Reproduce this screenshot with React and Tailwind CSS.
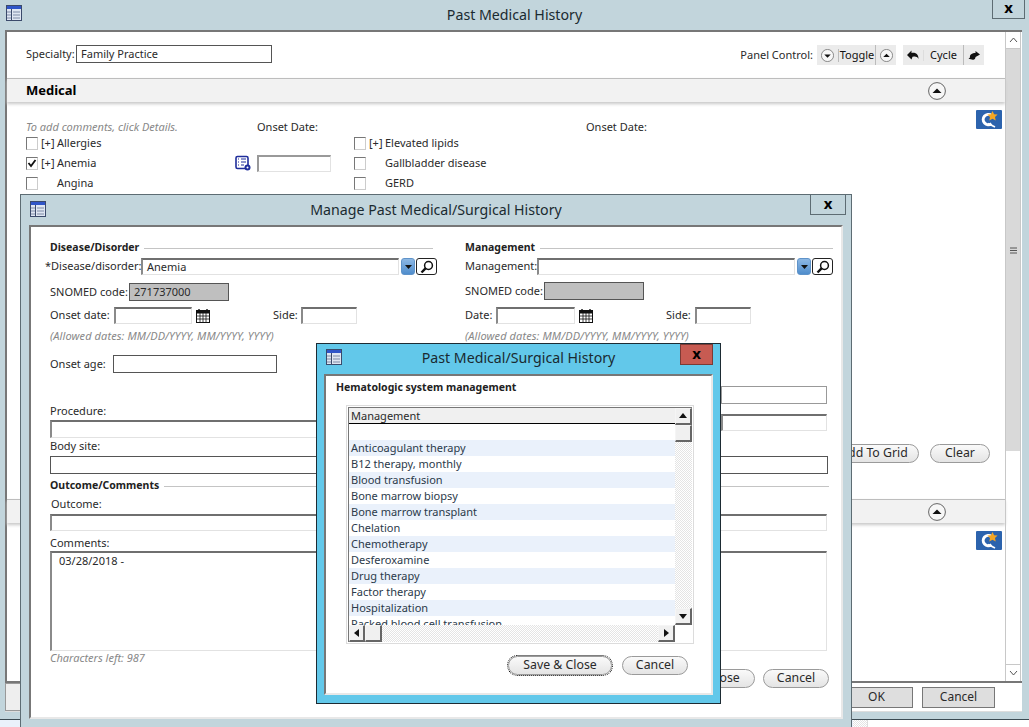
import React from 'react';

const TableIcon = () => (
  <svg width="16" height="16" viewBox="0 0 16 16" className="block">
    <rect x="0.5" y="0.5" width="15" height="15" fill="#dfe6f2" stroke="#3b4a6b" />
    <rect x="1" y="1" width="14" height="3" fill="#2f55c8" />
    <path d="M1 7h4M1 10h4M1 13h4M7 7h7M7 10h7M7 13h7" stroke="#7d8aa5" strokeWidth="1" />
    <path d="M5.5 4v11" stroke="#3b4a6b" />
  </svg>
);

const CircleArrow = ({ down, size = 18 }) => (
  <svg width={size} height={size} viewBox="0 0 18 18" className="block">
    <circle cx="9" cy="9" r="8.4" fill="#f7f7f7" stroke="#555" strokeWidth="0.9" />
    <path d={down ? 'M4.5 7.5h9L9 12z' : 'M4.5 11h9L9 6.5z'} fill="#111" />
  </svg>
);

const QIcon = () => (
  <svg width="26" height="19" viewBox="0 0 26 19" className="block">
    <rect width="26" height="19" rx="1" fill="#2c63ad" />
    <path d="M15.5 5.4a5.2 5.2 0 1 0 0 8.4" fill="none" stroke="#fff" strokeWidth="3" />
    <path d="M12 13.5l7 3.5" stroke="#fff" strokeWidth="1.6" />
    <path d="M16.5 1l1.6 3.2 3.5.4-2.6 2.4.7 3.5-3.2-1.8-3.2 1.8.7-3.5-2.6-2.4 3.5-.4z" fill="#f5a623" />
  </svg>
);

const CalendarIcon = () => (
  <svg width="14" height="14" viewBox="0 0 14 14" className="block">
    <rect x="0.5" y="1.5" width="13" height="12" fill="#fff" stroke="#111" />
    <rect x="1" y="2" width="12" height="2.5" fill="#111" />
    <path d="M3 0v3M11 0v3" stroke="#111" strokeWidth="1.4" />
    <path d="M4 4v9M7 4v9M10 4v9M1 7h12M1 10h12" stroke="#111" strokeWidth="0.8" />
  </svg>
);

const DropdownButton = () => (
  <div className="flex h-[17px] w-[14px] shrink-0 items-center justify-center rounded-[3px] border border-[#5f93c9] bg-gradient-to-b from-[#8db8e4] to-[#4f8dcc]">
    <svg width="7" height="4" viewBox="0 0 7 4"><path d="M0 0h7L3.5 4z" fill="#111" /></svg>
  </div>
);

const SearchButton = () => (
  <div className="flex h-[17px] w-[21px] shrink-0 items-center justify-center rounded-[3px] border border-[#222] bg-white">
    <svg width="14" height="14" viewBox="0 0 14 14">
      <circle cx="8.5" cy="5.5" r="3.9" fill="#fff" stroke="#111" strokeWidth="1.5" />
      <path d="M5.8 8.2L1.5 12.5" stroke="#111" strokeWidth="2.4" />
    </svg>
  </div>
);

const Sunken = ({ className = '', children }) => (
  <div className={`h-[17px] shrink-0 border-t-2 border-l-2 border-r border-b border-t-[#6f6f6f] border-l-[#8a8a8a] border-r-[#e2e2e2] border-b-[#e2e2e2] bg-white pl-1 leading-[13px] ${className}`}>
    {children}
  </div>
);

const Boxed = ({ className = '', bg = 'bg-white', children }) => (
  <div className={`h-[18px] shrink-0 border border-[#555] pl-1 leading-[16px] ${bg} ${className}`}>{children}</div>
);

const Pill = ({ className = '', children }) => (
  <div className={`flex h-[19px] items-center justify-center rounded-[10px] border border-[#9a9a9a] bg-gradient-to-b from-[#fafafa] to-[#e4e4e4] text-[12.3px] ${className}`}>
    {children}
  </div>
);

const Check = ({ checked }) => (
  <div className="flex h-[13px] w-[12px] items-center justify-center border-t border-l border-r border-b border-t-[#777] border-l-[#777] border-r-[#ccc] border-b-[#ccc] bg-white">
    {checked && (
      <svg width="10" height="10" viewBox="0 0 10 10"><path d="M1.5 5l2.5 3 4.5-6" fill="none" stroke="#111" strokeWidth="1.8" /></svg>
    )}
  </div>
);

const HistoryRow = ({ label, plus, checked }) => (
  <div className="flex h-[20px] items-center">
    <Check checked={checked} />
    <span className="ml-[3px] w-[16px] whitespace-nowrap">{plus ? '[+]' : ''}</span>
    <span>{label}</span>
  </div>
);

const SectionTitle = ({ children, className = '' }) => (
  <div className={`flex items-center ${className}`}>
    <span className="text-[10.5px] font-bold text-[#222]">{children}</span>
    <span className="ml-[5px] flex-1 border-t border-[#c4c4c4]" />
  </div>
);

const ArrowBtn = ({ d, className = '' }) => (
  <div className={`flex items-center justify-center border-t border-l border-r-2 border-b-2 border-t-[#f5f5f5] border-l-[#f5f5f5] border-r-[#666] border-b-[#666] bg-[#f0f0f0] ${className}`}>
    <svg width="8" height="8" viewBox="0 0 8 8"><path d={d} fill="#111" /></svg>
  </div>
);

const managementItems = [
  'Anticoagulant therapy',
  'B12 therapy, monthly',
  'Blood transfusion',
  'Bone marrow biopsy',
  'Bone marrow transplant',
  'Chelation',
  'Chemotherapy',
  'Desferoxamine',
  'Drug therapy',
  'Factor therapy',
  'Hospitalization',
  'Packed blood cell transfusion',
];

const ditherClass = 'bg-[repeating-conic-gradient(#e4e4e4_0%_25%,#ffffff_0%_50%)] bg-[length:2px_2px]';

function PickDialog() {
  return (
    <div className="absolute left-[316px] top-[343px] flex h-[361px] w-[405px] flex-col border border-[#1d2b33] bg-[#62c8ea] px-[7px]">
      <div className="relative flex h-[30px] shrink-0 items-center justify-center pb-[2px] text-[14.2px] text-[#1a2a30]">
        <div className="absolute left-[2px] top-[5px]"><TableIcon /></div>
        Past Medical/Surgical History
        <div className="absolute right-0 top-0 flex h-[21px] w-[33px] items-center justify-center border border-[#7c3a34] bg-[#c75b52] pb-[3px] text-[15px] font-bold leading-none text-black">x</div>
      </div>
      <div className="h-[321px] border-t-2 border-l-2 border-r-2 border-b-2 border-t-[#777] border-l-[#777] border-r-[#e8e8e8] border-b-[#e8e8e8] bg-white px-[10px] pt-[4px]">
        <div className="text-[10.5px] font-bold leading-[15px] text-[#222]">Hematologic system management</div>
        <div className="ml-[10px] mt-[10px] w-[348px] border border-[#dcdcdc] p-[1px]">
          <div className="flex h-[235px] flex-col border-t border-l border-[#777]">
            <div className="flex h-[217px]">
              <div className="flex w-[326px] flex-col overflow-hidden">
                <div className="h-[16px] shrink-0 border-b border-black bg-[#f0f0f0] pl-[2px] leading-[15px]">Management</div>
                <div className="h-[16px] shrink-0" />
                {managementItems.map((item, i) => (
                  <div key={item} className={`h-[16px] shrink-0 pl-[2px] leading-[16px] text-[#2b3a4a] ${i % 2 === 0 ? 'bg-[#eaf1fb]' : 'bg-white'}`}>{item}</div>
                ))}
              </div>
              <div className={`flex w-[17px] flex-col ${ditherClass}`}>
                <ArrowBtn className="h-[17px] shrink-0" d="M0 6h8L4 1z" />
                <ArrowBtn className="h-[17px] shrink-0" d="" />
                <div className="flex-1" />
                <ArrowBtn className="h-[17px] shrink-0" d="M0 2h8L4 7z" />
              </div>
            </div>
            <div className="flex h-[17px]">
              <div className={`flex w-[326px] ${ditherClass}`}>
                <ArrowBtn className="w-[16px] shrink-0" d="M6 0v8L1 4z" />
                <ArrowBtn className="w-[17px] shrink-0" d="" />
                <div className="flex-1" />
                <ArrowBtn className="w-[17px] shrink-0" d="M2 0v8l5-4z" />
              </div>
            </div>
          </div>
        </div>
        <div className="mt-[12px] flex justify-end gap-[10px] pr-[13px]">
          <Pill className="w-[104px] outline-1 outline-dotted outline-black">Save &amp; Close</Pill>
          <Pill className="w-[66px]">Cancel</Pill>
        </div>
      </div>
    </div>
  );
}

function ManageDialog() {
  return (
    <div className="absolute left-[20px] top-[194px] flex h-[540px] w-[832px] flex-col border border-[#5d6c73] bg-[#c2d5dc] px-[8px]">
      <div className="relative flex h-[30px] shrink-0 items-center justify-center text-[14.2px] text-[#1a2a30]">
        <div className="absolute left-[1px] top-[6px]"><TableIcon /></div>
        Manage Past Medical/Surgical History
        <div className="absolute right-[-3px] top-[-1px] flex h-[21px] w-[36px] items-center justify-center border border-[#5d6c73] pb-[3px] text-[15px] font-bold leading-none text-black">x</div>
      </div>
      <div className="h-[494px] border-t-2 border-l-2 border-r-2 border-b-2 border-t-[#777] border-l-[#777] border-r-[#e8e8e8] border-b-[#e8e8e8] bg-white pl-[19px] pr-[14px] pt-[14px]">
        <div className="grid grid-cols-[383px_1fr] gap-x-[32px]">
          <div>
            <SectionTitle className="h-[14px]">Disease/Disorder</SectionTitle>
            <div className="mt-[3px] flex h-[17px] items-center">
              <span className="ml-[-5px] w-[96px] shrink-0 whitespace-nowrap">*Disease/disorder:</span>
              <Sunken className="w-[258px]">Anemia</Sunken>
              <div className="ml-[2px]"><DropdownButton /></div>
              <div className="ml-[1px]"><SearchButton /></div>
            </div>
            <div className="mt-[8px] flex h-[18px] items-center">
              <span className="w-[79px] shrink-0 whitespace-nowrap">SNOMED code:</span>
              <Boxed className="w-[100px]" bg="bg-[#bfbfbf]">271737000</Boxed>
            </div>
            <div className="mt-[6px] flex h-[17px] items-center">
              <span className="w-[64px] shrink-0">Onset date:</span>
              <Sunken className="w-[78px]" />
              <div className="ml-[4px]"><CalendarIcon /></div>
              <span className="ml-[63px] w-[28px]">Side:</span>
              <Sunken className="w-[56px]" />
            </div>
            <div className="mt-[4px] h-[15px] whitespace-nowrap italic leading-[15px] tracking-[0.1px] text-[#888]">(Allowed dates: MM/DD/YYYY, MM/YYYY, YYYY)</div>
            <div className="mt-[12px] flex h-[18px] items-center">
              <span className="w-[63px] shrink-0">Onset age:</span>
              <Boxed className="w-[164px]" />
            </div>
          </div>
          <div>
            <SectionTitle className="h-[14px]">Management</SectionTitle>
            <div className="mt-[3px] flex h-[17px] items-center">
              <span className="w-[72px] shrink-0">Management:</span>
              <Sunken className="w-[258px]" />
              <div className="ml-[2px]"><DropdownButton /></div>
              <div className="ml-[1px]"><SearchButton /></div>
            </div>
            <div className="mt-[7px] flex h-[18px] items-center">
              <span className="w-[79px] shrink-0 whitespace-nowrap">SNOMED code:</span>
              <Boxed className="w-[100px]" bg="bg-[#bfbfbf]" />
            </div>
            <div className="mt-[7px] flex h-[17px] items-center">
              <span className="w-[31px] shrink-0">Date:</span>
              <Sunken className="w-[79px]" />
              <div className="ml-[4px]"><CalendarIcon /></div>
              <span className="ml-[73px] w-[29px]">Side:</span>
              <Sunken className="w-[56px]" />
            </div>
            <div className="mt-[4px] h-[15px] whitespace-nowrap italic leading-[15px] tracking-[0.1px] text-[#888]">(Allowed dates: MM/DD/YYYY, MM/YYYY, YYYY)</div>
          </div>
        </div>
        <div className="grid grid-cols-[383px_1fr] gap-x-[32px]">
          <div className="pt-[31px]">
            <div className="h-[14px] leading-[14px]">Procedure:</div>
            <Sunken className="mt-[2px] h-[18px]" />
          </div>
          <div className="flex flex-col gap-[10px] pl-[256px] pt-[13px]">
            <Boxed className="h-[17px] w-[106px] border-[#999]" />
            <Sunken className="w-[106px]" />
          </div>
        </div>
        <div className="w-[779px]">
          <div className="h-[15px] leading-[15px]">Body site:</div>
          <Boxed className="mt-[3px] w-[778px]" />
          <SectionTitle className="mt-[5px] h-[14px]">Outcome/Comments</SectionTitle>
          <div className="mt-[4px] h-[14px] pl-[1px] leading-[14px]">Outcome:</div>
          <Sunken className="mt-[3px] w-[777px]" />
          <div className="mt-[5px] h-[14px] leading-[14px]">Comments:</div>
          <Sunken className="mt-[1px] h-[100px] w-[777px] pl-[7px] pt-[1px]">03/28/2018 -</Sunken>
          <div className="h-[14px] italic leading-[14px] text-[#888]">Characters left: 987</div>
          <div className="mt-[4px] flex justify-end gap-[8px]">
            <Pill className="w-[104px]">Save &amp; Close</Pill>
            <Pill className="w-[66px]">Cancel</Pill>
          </div>
        </div>
      </div>
    </div>
  );
}

function OuterWindow() {
  return (
    <div className="flex h-[720px] flex-col border-b border-[#3b4a52] bg-[#c2d5dc]">
      <div className="relative flex h-[30px] shrink-0 items-center justify-center text-[14.2px] text-[#1a2a30]">
        <div className="absolute left-[6px] top-[5px]"><TableIcon /></div>
        Past Medical History
        <div className="absolute left-[992px] top-0 flex h-[19px] w-[33px] items-center justify-center border border-t-0 border-[#5d6c73] pb-[3px] text-[15px] font-bold leading-none text-black">x</div>
      </div>
      <div className="ml-[5px] mr-[7px] flex h-[651px] shrink-0 border-t-2 border-l-2 border-t-[#777] border-l-[#777] bg-white">
        <div className="flex w-[998px] flex-col">
          <div className="flex h-[46px] shrink-0 items-start justify-between pl-[19px] pr-[21px] pt-[13px]">
            <div className="flex h-[18px] items-center">
              <span className="w-[50px]">Specialty:</span>
              <Boxed className="w-[196px]">Family Practice</Boxed>
            </div>
            <div className="flex items-center">
              <span className="mr-[4px]">Panel Control:</span>
              <div className="flex h-[20px] items-center bg-[#ebebeb]">
                <div className="flex w-[22px] justify-center border-r border-[#bbb]"><CircleArrow down size={13} /></div>
                <div className="w-[37px] border-r border-[#bbb] text-center leading-[20px] text-[#111]">Toggle</div>
                <div className="flex w-[20px] justify-center"><CircleArrow size={13} /></div>
                <div className="h-[20px] w-[7px] bg-white" />
                <div className="flex w-[21px] justify-center border-r border-[#ddd]">
                  <svg width="12" height="11" viewBox="0 0 12 11"><path d="M0 5L4.5 0.5v2.4C8 2.4 11.5 3.5 11.5 9 10.5 7 9 6.4 7 6.6l-1.5 .2L4.5 9.5z" fill="#111" /></svg>
                </div>
                <div className="w-[40px] border-r border-[#bbb] text-center leading-[20px] text-[#111]">Cycle</div>
                <div className="flex w-[20px] justify-center">
                  <svg width="12" height="11" viewBox="0 0 12 11"><path d="M12 4.5L7.5 1v2C4 3 1.5 4.5 2 7.5L0.5 8.5c2 .8 4 1.5 5.5 1 1.5-.5 1.500-2.500 1.500-2.500z" fill="#111" /></svg>
                </div>
              </div>
            </div>
          </div>
          <div className="relative flex h-[24px] shrink-0 items-center border-t border-[#bdbdbd] bg-[#f2f2f2] pl-[19px] text-[13px] font-bold text-black shadow-[0_2px_3px_#c8c8c8]">
            Medical
            <div className="absolute left-[921px] top-[3px]"><CircleArrow /></div>
          </div>
          <div className="flex h-[388px] shrink-0 justify-between pl-[19px] pr-[3px] pt-[8px]">
            <div className="pt-[10px]">
              <div className="flex h-[14px] items-center leading-[14px]">
                <span className="w-[231px] italic text-[#888]">To add comments, click Details.</span>
                <span className="w-[329px]">Onset Date:</span>
                <span>Onset Date:</span>
              </div>
              <div className="mt-[-1px] grid grid-cols-[328px_1fr]">
                <div>
                  <HistoryRow label="Allergies" plus />
                  <div className="flex items-center">
                    <div className="w-[209px]"><HistoryRow label="Anemia" plus checked /></div>
                    <svg width="16" height="16" viewBox="0 0 16 16">
                      <rect x="1" y="1.5" width="12" height="12" rx="1.5" fill="#fff" stroke="#1f2d9b" strokeWidth="1.6" />
                      <path d="M3 4h1M3 7h1M3 10h1M6 4h5M6 7h5M6 10h3" stroke="#1f2d9b" strokeWidth="1.2" />
                      <circle cx="12.5" cy="12.5" r="3" fill="#1f2d9b" />
                      <circle cx="12.5" cy="12.5" r="1" fill="#fff" />
                    </svg>
                    <Sunken className="ml-[6px] w-[74px] border-t border-l border-t-[#999] border-l-[#999]" />
                  </div>
                  <HistoryRow label="Angina" />
                </div>
                <div>
                  <HistoryRow label="Elevated lipids" plus />
                  <HistoryRow label="Gallbladder disease" />
                  <HistoryRow label="GERD" />
                </div>
              </div>
            </div>
            <QIcon />
          </div>
          <div className="mt-[-46px] flex h-[19px] shrink-0 justify-end gap-[11px] pr-[15px]">
            <Pill className="w-[90px]">Add To Grid</Pill>
            <Pill className="w-[60px]">Clear</Pill>
          </div>
          <div className="relative mt-[36px] flex h-[24px] shrink-0 items-center border-t border-[#bdbdbd] bg-[#f2f2f2] shadow-[0_2px_3px_#c8c8c8]">
            <div className="absolute left-[921px] top-[3px]"><CircleArrow /></div>
          </div>
          <div className="flex justify-end pr-[3px] pt-[8px]"><QIcon /></div>
        </div>
        <div className="flex w-[16px] flex-col border-l border-r border-[#c8c8c8]">
          <div className="flex h-[17px] shrink-0 items-center justify-center border-b border-[#c8c8c8]">
            <svg width="9" height="6" viewBox="0 0 9 6"><path d="M1 5l3.5-4L8 5" fill="none" stroke="#555" /></svg>
          </div>
          <div className="flex h-[402px] shrink-0 items-center justify-center bg-[#d9d9d9]">
            <svg width="7" height="7" viewBox="0 0 7 7"><path d="M0 1h7M0 3.5h7M0 6h7" stroke="#555" /></svg>
          </div>
          <div className="flex-1" />
          <div className="flex h-[17px] shrink-0 items-center justify-center border-t border-[#c8c8c8]">
            <svg width="9" height="6" viewBox="0 0 9 6"><path d="M1 1l3.5 4L8 1" fill="none" stroke="#555" /></svg>
          </div>
        </div>
      </div>
      <div className="ml-[5px] mr-[7px] flex h-[31px] shrink-0 items-center justify-between border-t-2 border-t-[#777] border-b border-b-[#ddd] bg-white pr-[27px]">
        <div className="h-[28px] w-[40px] border border-[#999] bg-[#eeeeee]" />
        <div className="flex gap-[9px]">
          <div className="flex h-[21px] w-[73px] items-center justify-center border border-[#777] bg-[#dedede] text-[12px]">OK</div>
          <div className="flex h-[21px] w-[73px] items-center justify-center border border-[#777] bg-[#dedede] text-[12px]">Cancel</div>
        </div>
      </div>
    </div>
  );
}

export default function App() {
  return (
    <div className="relative h-[727px] w-[1029px] overflow-hidden bg-white font-['Noto_Sans',sans-serif] text-[11px] text-[#2a2a2a]">
      <OuterWindow />
      <div className="flex h-[7px]">
        <div className="w-[853px] bg-[#eaf1fb]" />
        <div className={`w-[15px] border-r border-[#dddddd] ${ditherClass}`} />
      </div>
      <ManageDialog />
      <PickDialog />
    </div>
  );
}
